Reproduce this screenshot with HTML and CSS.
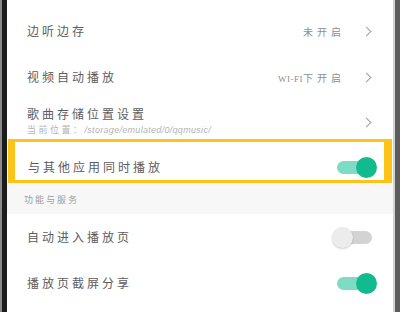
FILE: index.html
```html
<!DOCTYPE html>
<html lang="zh-CN">
<head>
    <meta charset="UTF-8">
    <meta name="viewport" content="width=device-width, initial-scale=1.0">
    <title>设置</title>
    <link rel="stylesheet" href="styles.css">
</head>
<body>
    <div class="frame">
        <div class="edge-left"></div>
        <div class="screen">
            <div class="row">
                <span class="label">边听边存</span>
                <span class="value">未开启</span>
                <span class="chevron"></span>
            </div>
            <div class="row">
                <span class="label">视频自动播放</span>
                <span class="value"><span class="latin">WI-FI</span>下开启</span>
                <span class="chevron"></span>
            </div>
            <div class="row storage">
                <div class="stack">
                    <span class="label">歌曲存储位置设置</span>
                    <span class="sub">当前位置：<span class="path">/storage/emulated/0/qqmusic/</span></span>
                </div>
                <span class="chevron"></span>
            </div>
            <div class="row highlight">
                <span class="label">与其他应用同时播放</span>
                <span class="toggle on"><span class="track"></span><span class="thumb"></span></span>
            </div>
            <div class="section">功能与服务</div>
            <div class="row switch-row">
                <span class="label">自动进入播放页</span>
                <span class="toggle off"><span class="track"></span><span class="thumb"></span></span>
            </div>
            <div class="row switch-row">
                <span class="label">播放页截屏分享</span>
                <span class="toggle on"><span class="track"></span><span class="thumb"></span></span>
            </div>
        </div>
        <div class="edge-right"></div>
    </div>
</body>
</html>
```

FILE: styles.css
```css
html, body {
    margin: 0;
    padding: 0;
    background: #fff;
}
body {
    font-family: "Noto Sans CJK SC", "Noto Sans", sans-serif;
    color: #555;
}
.frame {
    display: flex;
    width: 400px;
    height: 312px;
    overflow: hidden;
}
.edge-left {
    width: 7px;
    background: linear-gradient(to right, #8a8a8a 0, #8a8a8a 2px, #1c1c1c 2px);
}
.edge-right {
    width: 7px;
    background: linear-gradient(to right, #d2d2d2 0, #d2d2d2 2px, #5c5c5c 2px);
}
.screen {
    flex: 1;
    padding-top: 8px;
    background: #fff;
}
.row {
    display: flex;
    align-items: center;
    height: 46px;
    padding: 0 21px 0 20px;
    box-sizing: border-box;
}
.label {
    flex: 1;
    font-size: 12px;
    letter-spacing: 3px;
    line-height: 16px;
    color: #5c5c5c;
}
.value {
    font-size: 10px;
    letter-spacing: 4px;
    color: #8e8e8e;
    margin-right: 18px;
}
.latin {
    font-family: "Liberation Serif", serif;
    font-size: 9px;
    letter-spacing: 0.5px;
}
.chevron {
    width: 6px;
    height: 6px;
    border-top: 1.2px solid #a0a0a0;
    border-right: 1.2px solid #a0a0a0;
    transform: rotate(45deg);
    margin-right: 2px;
}
.row.storage {
    height: 39px;
    align-items: flex-start;
}
.stack {
    flex: 1;
    display: flex;
    flex-direction: column;
    padding-top: 6px;
}
.row.storage .chevron {
    margin-top: 19px;
}
.sub {
    font-size: 9px;
    letter-spacing: 2.5px;
    color: #b3b3b3;
    line-height: 14px;
    margin-top: 1px;
}
.path {
    font-family: "Liberation Sans", sans-serif;
    font-size: 9px;
    letter-spacing: 0.3px;
    font-style: italic;
}
.row.highlight {
    height: 44px;
    margin: 0 1px;
    border-style: solid;
    border-color: #fcc419;
    border-width: 3px 8px 3px 7px;
    padding: 12px 7px 0 13px;
}
.section {
    height: 31px;
    background: #f7f7f7;
    padding: 2px 0 0 17px;
    box-sizing: border-box;
    display: flex;
    align-items: center;
    font-size: 9px;
    letter-spacing: 2px;
    color: #9e9e9e;
}
.row.switch-row {
    padding-right: 16px;
}
.toggle {
    position: relative;
    width: 42px;
    height: 21px;
}
.track {
    position: absolute;
    left: 2px;
    right: 2px;
    top: 4px;
    height: 13px;
    border-radius: 7px;
}
.thumb {
    position: absolute;
    top: 0;
    width: 21px;
    height: 21px;
    border-radius: 50%;
}
.toggle.on .track {
    background: #7fdcc4;
}
.toggle.on .thumb {
    right: 0;
    background: #12ba8f;
}
.toggle.off {
    margin-right: 3px;
}
.toggle.off .track {
    background: #d3d3d3;
}
.toggle.off .thumb {
    left: 0;
    background: #ececec;
    box-shadow: 0 1px 2px rgba(0, 0, 0, 0.2);
}
```
